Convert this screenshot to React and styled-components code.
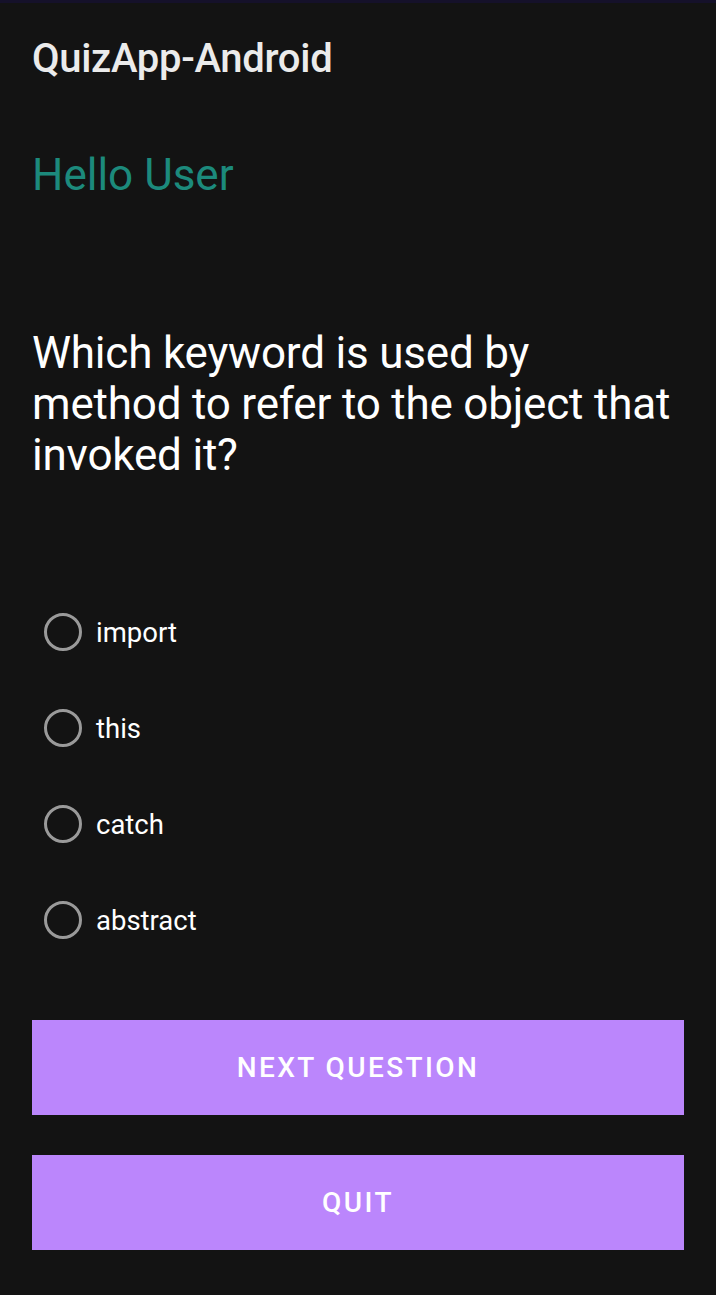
import styled, { createGlobalStyle } from "styled-components";

const GlobalStyle = createGlobalStyle`
  html, body {
    margin: 0;
    padding: 0;
    background: #131313;
  }
  body {
    font-family: Roboto, "Noto Sans", sans-serif;
  }
`;

const StyledScreen = styled.div`
  min-height: 1295px;
  background-color: #131313;
  border-top: 3px solid #15112a;
  box-sizing: border-box;
  padding: 0 32px;
  display: flex;
  flex-direction: column;
`;

const StyledAppTitle = styled.h1`
  margin: 34px 0 0;
  font-size: 40px;
  font-weight: 500;
  line-height: 44px;
  color: #ebebeb;
  letter-spacing: -0.3px;
`;

const StyledGreeting = styled.h2`
  margin: 70px 0 0;
  font-size: 44px;
  font-weight: 400;
  line-height: 48px;
  color: #1c8a7c;
`;

const StyledQuestion = styled.p`
  margin: 129px 0 0;
  font-size: 44px;
  line-height: 51px;
  color: #ffffff;
  letter-spacing: -0.2px;
`;

const StyledOptions = styled.div`
  margin-top: 103px;
  display: flex;
  flex-direction: column;
`;

const StyledOption = styled.label`
  display: flex;
  align-items: center;
  height: 96px;
  padding-left: 12px;
  gap: 14px;
  color: #ffffff;
  font-size: 27.5px;
`;

const StyledRadio = styled.span`
  width: 38px;
  height: 38px;
  border: 3.5px solid #9a9a9a;
  border-radius: 50%;
  box-sizing: border-box;
  flex: none;
`;

const StyledButtons = styled.div`
  margin-top: 52px;
  display: flex;
  flex-direction: column;
  gap: 40px;
`;

const StyledButton = styled.button`
  height: 95px;
  border: none;
  background-color: #bb86fc;
  color: #ffffff;
  font-family: Roboto, "Noto Sans", sans-serif;
  font-size: 28px;
  font-weight: 500;
  letter-spacing: 2.4px;
  text-transform: uppercase;
`;

const options = ["import", "this", "catch", "abstract"];

const App = () => {
  return (
    <>
      <GlobalStyle />
      <StyledScreen>
        <StyledAppTitle>QuizApp-Android</StyledAppTitle>
        <StyledGreeting>Hello User</StyledGreeting>
        <StyledQuestion>
          Which keyword is used by method to refer to the object that invoked
          it?
        </StyledQuestion>
        <StyledOptions>
          {options.map((option) => (
            <StyledOption key={option}>
              <StyledRadio />
              {option}
            </StyledOption>
          ))}
        </StyledOptions>
        <StyledButtons>
          <StyledButton>Next Question</StyledButton>
          <StyledButton>Quit</StyledButton>
        </StyledButtons>
      </StyledScreen>
    </>
  );
};

export default App;
